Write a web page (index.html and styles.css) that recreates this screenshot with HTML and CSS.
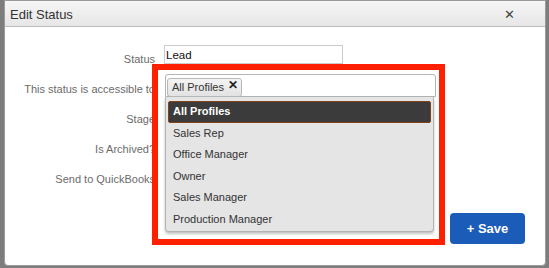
FILE: index.html
```html
<!DOCTYPE html>
<html lang="en">
<head>
    <meta charset="UTF-8">
    <title>Edit Status</title>
    <link rel="stylesheet" href="styles.css">
</head>
<body>
    <div class="dialog">
        <div class="titlebar">
            <span class="title">Edit Status</span>
            <span class="close">&#x2715;</span>
        </div>
        <div class="dialog-body">
            <div class="form">
                <label class="form-label">Status</label>
                <div class="form-field"><input type="text" class="text-input" value="Lead"></div>

                <label class="form-label">This status is accessible to</label>
                <div class="form-field">
                    <div class="select-box">
                        <span class="tag">All Profiles <b class="tag-x">&#x2715;</b></span>
                        <ul class="dropdown">
                            <li class="option active">All Profiles</li>
                            <li class="option">Sales Rep</li>
                            <li class="option">Office Manager</li>
                            <li class="option">Owner</li>
                            <li class="option">Sales Manager</li>
                            <li class="option">Production Manager</li>
                        </ul>
                    </div>
                </div>

                <label class="form-label">Stage</label>
                <div class="form-field"></div>

                <label class="form-label">Is Archived?</label>
                <div class="form-field"></div>

                <label class="form-label">Send to QuickBooks</label>
                <div class="form-field"></div>
            </div>
            <div class="footer">
                <button class="save-button">+ Save</button>
            </div>
        </div>
        <div class="callout"></div>
    </div>
</body>
</html>
```

FILE: styles.css
```css
body {
    margin: 0;
    background-color: #7d7d7d;
    font-family: "Liberation Sans", Arial, sans-serif;
}
.dialog {
    position: relative;
    margin-left: 4px;
    width: 542px;
    height: 266px;
    box-sizing: border-box;
    background-color: #fff;
    border: 1px solid #9a9a9a;
    border-radius: 0 0 4px 4px;
    display: flex;
    flex-direction: column;
}
.titlebar {
    height: 25px;
    background: linear-gradient(#f6f6f6, #e6e6e6);
    border-bottom: 1px solid #bcbcbc;
    display: flex;
    align-items: center;
    justify-content: space-between;
    padding: 0 30px 0 5px;
}
.title {
    font-size: 13px;
    color: #333;
    margin-top: 1px;
}
.close {
    font-size: 13px;
    color: #444;
    margin-top: 2px;
}
.dialog-body {
    flex: 1;
}
.form {
    display: grid;
    grid-template-columns: 150px 1fr;
    grid-auto-rows: 30px;
    column-gap: 9px;
    padding-top: 16px;
}
.form-label {
    font-size: 11px;
    color: #6b6b6b;
    text-align: right;
    line-height: 30px;
    white-space: nowrap;
    padding-top: 1px;
}
.text-input {
    margin-top: 2px;
    width: 179px;
    height: 19px;
    box-sizing: border-box;
    border: 1px solid #cbcbcb;
    padding: 0 1px;
    font-family: "Liberation Sans", Arial, sans-serif;
    font-size: 11.5px;
    color: #111;
    outline: none;
}
.select-box {
    position: relative;
    margin: 1px 0 0 1px;
    width: 271px;
    height: 23px;
    box-sizing: border-box;
    border: 1px solid #b4b4b4;
    border-radius: 3px 3px 0 0;
    padding: 2px 1px;
    background-color: #fff;
}
.tag {
    display: inline-flex;
    align-items: center;
    white-space: nowrap;
    height: 19px;
    box-sizing: border-box;
    padding: 0 3px 0 4px;
    border: 1px solid #b8b8b8;
    border-radius: 3px;
    background: linear-gradient(#f4f4f4, #e2e2e2);
    font-size: 11px;
    color: #333;
}
.tag-x {
    margin-left: 4px;
    font-size: 12px;
    color: #222;
    margin-top: -4px;
}
.dropdown {
    position: absolute;
    left: -1px;
    top: 22px;
    width: 269px;
    height: 135px;
    box-sizing: border-box;
    margin: 0;
    padding: 4px 2px 0;
    list-style: none;
    background-color: #e5e5e5;
    border: 1px solid #b4b4b4;
    border-top: none;
    border-radius: 0 0 4px 4px;
    box-shadow: 0 2px 3px rgba(0, 0, 0, 0.25);
}
.option {
    height: 21.5px;
    line-height: 21.5px;
    padding-left: 5px;
    font-size: 11px;
    color: #333;
}
.option.active {
    background-color: #3b3b3b;
    border: 1px solid #84421a;
    border-radius: 2px;
    box-sizing: border-box;
    line-height: 19.5px;
    padding-left: 4px;
    color: #fff;
    font-weight: bold;
}
.footer {
    display: flex;
    justify-content: flex-end;
    padding: 20px 20px 0 0;
}
.save-button {
    width: 75px;
    height: 31px;
    border: none;
    border-radius: 4px;
    background-color: #1b5cb9;
    color: #fff;
    font-family: "Liberation Sans", Arial, sans-serif;
    font-size: 13px;
    font-weight: bold;
}
.callout {
    position: absolute;
    left: 147px;
    top: 63px;
    width: 293px;
    height: 181px;
    box-sizing: border-box;
    border: 6px solid #ff2000;
}
```
